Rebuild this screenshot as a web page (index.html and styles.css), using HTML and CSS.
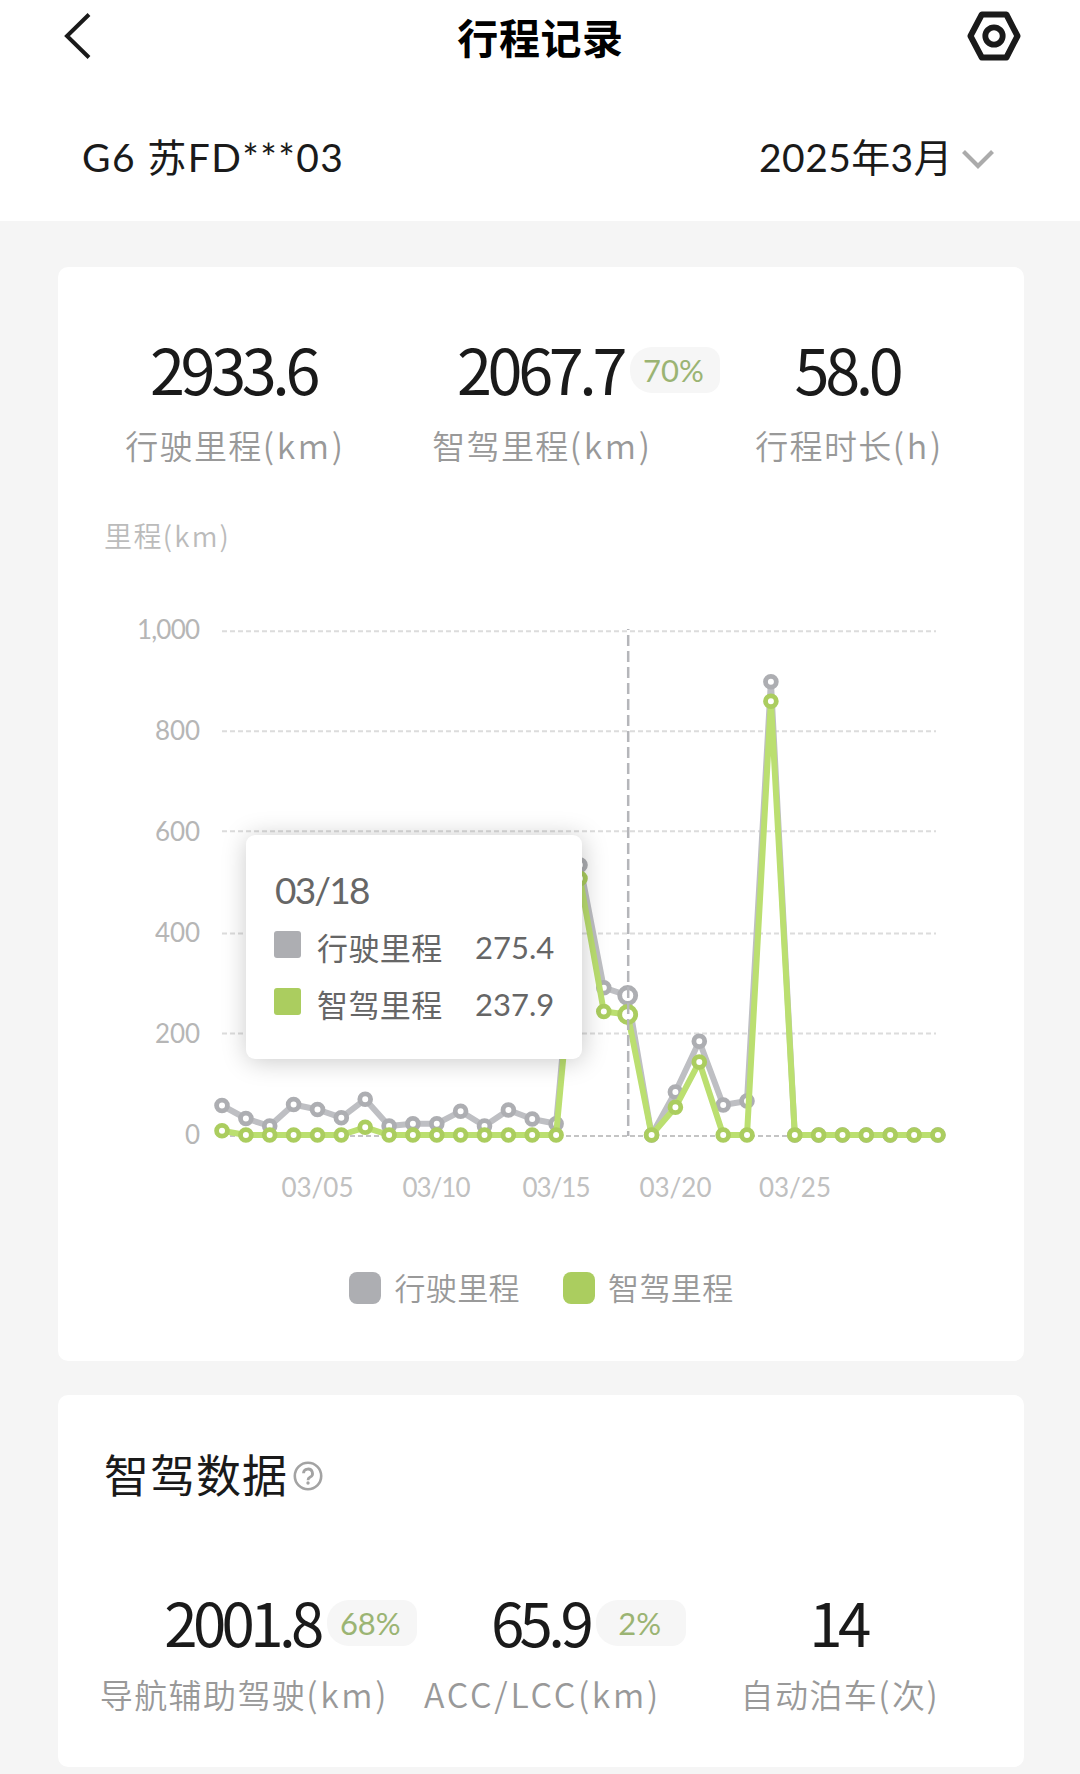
FILE: index.html
```html
<!DOCTYPE html>
<html lang="zh-CN">
<head>
<meta charset="utf-8">
<title>行程记录</title>
<link rel="stylesheet" href="styles.css">
</head>
<body>
<header class="header">
  <div class="topbar">
    <svg class="back" width="30" height="48" viewBox="0 0 30 48" fill="none" stroke="#1a1a1a" stroke-width="4"><path d="M26 2.500 4 24 26 45.500"/></svg>
    <h1 class="page-title">行程记录</h1>
    <svg class="settings" width="56" height="52" viewBox="0 0 56 52" fill="none" stroke="#1a1a1a" stroke-linejoin="round"><path stroke-width="6" d="M15.800 4.500h24.600L51.500 26 40.400 47.500H15.800L4.500 26z"/><circle cx="28" cy="26" r="8.700" stroke-width="5.800"/></svg>
  </div>
  <div class="filter">
    <div class="car">G6 苏FD***03</div>
    <div class="month"><span class="month-text">2025年3月</span><svg width="32" height="24" viewBox="0 0 32 24" fill="none" stroke="#ababab" stroke-width="4.200"><path d="M1.500 2.500 16 17 30.500 2.500"/></svg></div>
  </div>
</header>
<main class="content">
  <section class="card summary">
    <div class="stats">
      <div class="stat"><div class="value">2933.6</div><div class="label">行驶里程<span class="latin">(km)</span></div></div>
      <div class="stat"><div class="value">2067.7<span class="chip">70%</span></div><div class="label">智驾里程<span class="latin">(km)</span></div></div>
      <div class="stat"><div class="value">58.0</div><div class="label">行程时长<span class="latin">(h)</span></div></div>
    </div>
    <div class="unit">里程<span class="latin">(km)</span></div>
    <div class="chart">
      <svg class="plot" width="966" height="640" viewBox="58 580 966 640">
        <defs>
          <marker id="dot-gray" markerUnits="userSpaceOnUse" markerWidth="18" markerHeight="18" refX="9" refY="9"><circle cx="9" cy="9" r="5.400" fill="#fff" stroke="#adaeb2" stroke-width="4.800"/></marker>
          <marker id="dot-green" markerUnits="userSpaceOnUse" markerWidth="18" markerHeight="18" refX="9" refY="9"><circle cx="9" cy="9" r="5.400" fill="#fff" stroke="#abcd5f" stroke-width="4.800"/></marker>
        </defs>
        <g class="grid"><path d="M222 631.300H936M222 731.200H936M222 831.200H936M222 933.500H936M222 1033.500H936"/><path class="axis" d="M222 1136H936"/></g>
        <g class="y-labels">
          <text x="137" y="638.500" textLength="63">1,000</text>
          <text x="155" y="739.500" textLength="45">800</text>
          <text x="155" y="840.500" textLength="45">600</text>
          <text x="155" y="941.500" textLength="45">400</text>
          <text x="155" y="1042.500" textLength="45">200</text>
          <text x="185" y="1143.500">0</text>
        </g>
        <g class="x-labels">
          <text x="281.500" y="1196.500" textLength="72">03/05</text>
          <text x="402.500" y="1196.500" textLength="68">03/10</text>
          <text x="522.500" y="1196.500" textLength="68">03/15</text>
          <text x="639.500" y="1196.500" textLength="72">03/20</text>
          <text x="759" y="1196.500" textLength="72">03/25</text>
        </g>
        <polyline class="line gray" points="222,1105.500 245.900,1118.500 269.700,1126 293.600,1104.500 317.500,1109.500 341.300,1117.700 365.200,1099.300 389.100,1126 412.900,1123.700 436.800,1123.700 460.600,1111.300 484.500,1126 508.400,1110 532.200,1119 556.100,1123.700 580,865 603.800,987.700 627.700,995.500 651.600,1135 675.400,1092 699.300,1041.300 723.200,1105 747,1101 770.900,681.700 794.800,1135 818.600,1135 842.500,1135 866.300,1135 890.200,1135 914.100,1135 937.900,1135"/>
        <circle cx="627.700" cy="995.500" r="8" fill="#fff" stroke="#adaeb2" stroke-width="4.800"/>
        <polyline class="line green" points="222,1130.700 245.900,1135 269.700,1135 293.600,1135 317.500,1135 341.300,1135 365.200,1127.300 389.100,1135 412.900,1135 436.800,1135 460.600,1135 484.500,1135 508.400,1135 532.200,1135 556.100,1135 580,878.500 603.800,1011.500 627.700,1014.500 651.600,1135 675.400,1107.300 699.300,1062 723.200,1135 747,1135 770.900,701.300 794.800,1135 818.600,1135 842.500,1135 866.300,1135 890.200,1135 914.100,1135 937.900,1135"/>
        <circle cx="627.700" cy="1014.500" r="8" fill="#fff" stroke="#abcd5f" stroke-width="4.800"/>
        <path class="pointer" d="M628.200 629V1136"/>
      </svg>
      <div class="tooltip">
        <div class="tip-date">03/18</div>
        <div class="tip-row"><i class="swatch gray-bg"></i><span class="tip-name">行驶里程</span><span class="tip-num">275.4</span></div>
        <div class="tip-row"><i class="swatch green-bg"></i><span class="tip-name">智驾里程</span><span class="tip-num">237.9</span></div>
      </div>
    </div>
    <div class="legend">
      <div class="legend-item"><i class="key gray-bg"></i><span>行驶里程</span></div>
      <div class="legend-item"><i class="key green-bg"></i><span>智驾里程</span></div>
    </div>
  </section>
  <section class="card assist">
    <div class="section-head"><h2 class="section-title">智驾数据</h2><svg width="30" height="30" viewBox="0 0 30 30" fill="none" stroke="#a3a3a3"><circle cx="15" cy="15" r="13.200" stroke-width="2.600"/><path stroke-width="2.800" d="M10.500 12.200a4.500 4.300 0 1 1 6.400 4C15.400 17 15 17.500 15 19.200"/><circle cx="15" cy="22" r="1.700" fill="#a3a3a3" stroke="none"/></svg></div>
    <div class="stats assist-stats">
      <div class="stat"><div class="value">2001.8<span class="chip">68%</span></div><div class="label">导航辅助驾驶<span class="latin">(km)</span></div></div>
      <div class="stat"><div class="value">65.9<span class="chip">2%</span></div><div class="label"><span class="latin">ACC/LCC(km)</span></div></div>
      <div class="stat"><div class="value">14</div><div class="label">自动泊车<span class="latin">(</span>次<span class="latin">)</span></div></div>
    </div>
  </section>
</main>
</body>
</html>
```
FILE: styles.css
```css
* { box-sizing: border-box; }
body {
  margin: 0;
  background: #f5f5f5;
  color: #1a1a1a;
  font-family: Lato, "Noto Sans CJK SC", sans-serif;
}
.header { height: 221px; background: #fff; }
.topbar {
  display: grid;
  grid-template-columns: 1fr auto 1fr;
  align-items: center;
  height: 72px;
  padding: 0 58px 0 63px;
}
.back, .settings { margin-top: -1px; }
.settings { justify-self: end; }
.page-title {
  margin: 0 0 0 -4px;
  color: #000;
  font-family: "Noto Sans CJK SC", sans-serif;
  font-size: 41px;
  font-weight: 700;
  line-height: 70px;
  letter-spacing: .6px;
}
.filter {
  display: flex;
  justify-content: space-between;
  align-items: center;
  height: 170px;
  margin-bottom: -6px;
  padding: 0 86px 0 82px;
  font-size: 39px;
  line-height: 60px;
}
.car { letter-spacing: 1.4px; }
.month { display: flex; align-items: center; gap: 9px; letter-spacing: .4px; }
.month svg { margin-top: 7px; }
.content { display: flex; flex-direction: column; gap: 34px; padding: 46px 56px 7px 58px; }
.card { border-radius: 10px; background: #fff; }
.summary { height: 1094px; padding-top: 66px; }
.stats { display: grid; grid-template-columns: repeat(3, 307px); justify-content: center; }
.stat { display: flex; flex-direction: column; align-items: center; }
.value {
  position: relative;
  height: 72px;
  margin-left: -2px;
  font-family: "Noto Sans CJK SC", sans-serif;
  font-size: 63px;
  font-weight: 400;
  line-height: 69px;
  letter-spacing: -4.4px;
}
.chip {
  position: absolute;
  top: 14px;
  left: calc(100% + 7px);
  width: 90px;
  height: 46px;
  padding-right: 3px;
  border-radius: 22px 14px 14px 22px;
  background: #f6f6f6;
  color: #9bb473;
  font-family: Lato, sans-serif;
  font-size: 31px;
  line-height: 46px;
  letter-spacing: 0;
  text-align: center;
}
.label, .unit, .legend { font-family: "Noto Sans CJK SC", sans-serif; font-weight: 350; }
.label { padding-left: 3px; color: #999; font-size: 33px; line-height: 80px; letter-spacing: 1.4px; white-space: nowrap; }
.latin { font-size: 34px; letter-spacing: 2.7px; }
.unit { margin-top: 22px; padding-left: 46px; color: #bbb; font-size: 28px; line-height: 56px; letter-spacing: 1.4px; }
.unit .latin { font-size: 28px; letter-spacing: 2.2px; }
.chart { position: relative; height: 640px; margin-top: 17px; }
.plot { display: block; }
.grid path { fill: none; stroke: #dcdcdc; stroke-width: 2; stroke-dasharray: 5 3; }
.grid .axis { stroke: #c4c4c4; }
.y-labels, .x-labels { font-size: 26px; fill: #b6b6b6; }
.x-labels { fill: #c0c0c0; }
.line { fill: none; stroke-width: 6; stroke-linejoin: bevel; }
.line.gray { stroke: #bebfc3; marker: url(#dot-gray); }
.line.green { stroke: #bbdf70; marker: url(#dot-green); }
.pointer { stroke: #b5b6ba; stroke-width: 2.5; stroke-dasharray: 11 5; stroke-dashoffset: 10; }
.tooltip {
  position: absolute;
  left: 188px;
  top: 255px;
  width: 336px;
  height: 224px;
  padding: 27px 0 0 28px;
  border-radius: 9px;
  background: #fff;
  box-shadow: 1px 2px 26px rgba(0, 0, 0, .22);
  color: #666;
}
.tip-date { padding-left: 1px; font-size: 37px; line-height: 56px; letter-spacing: -1.8px; }
.tip-row { display: flex; align-items: center; height: 57px; font-size: 31px; }
.swatch { width: 27px; height: 27px; margin: -4px 16px 0 0; border-radius: 3px; }
.tip-name { width: 158px; letter-spacing: .4px; }
.gray-bg { background: #adaeb2; }
.green-bg { background: #abcd5f; }
.legend { display: flex; justify-content: center; gap: 43px; margin-top: 46px; padding-left: 1px; color: #999; font-size: 31px; line-height: 46px; letter-spacing: .4px; }
.legend-item { display: flex; align-items: center; gap: 13px; }
.legend-item span { margin-top: -2px; }
.key { width: 32px; height: 32px; border-radius: 8px; }
.assist { height: 372px; padding-top: 48px; }
.section-head { display: flex; align-items: center; gap: 5px; height: 66px; padding-left: 46px; }
.section-title { margin: 0; font-size: 45px; font-weight: 400; line-height: 66px; letter-spacing: 1px; }
.assist-stats { grid-template-columns: repeat(3, 298px); padding-top: 77px; }
.assist-stats .value { height: 68px; font-size: 60px; letter-spacing: -4.6px; }
```
